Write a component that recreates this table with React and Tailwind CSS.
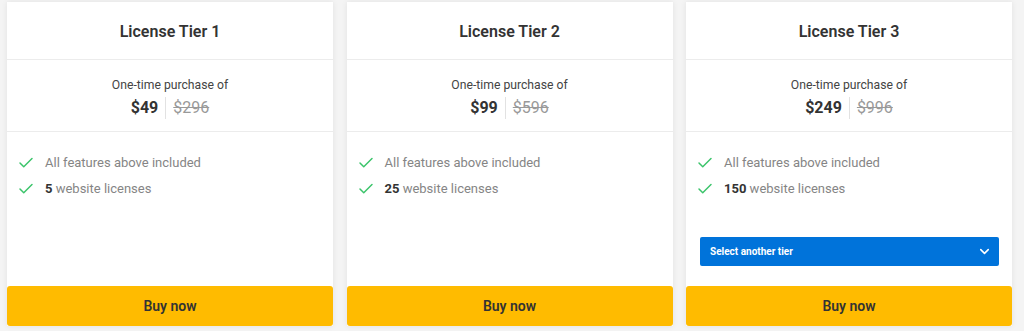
import React from "react";
import { Check, ChevronDown } from "lucide-react";

const tiers = [
    { name: "License Tier 1", price: "$49", old: "$296", licenses: "5" },
    { name: "License Tier 2", price: "$99", old: "$596", licenses: "25" },
    { name: "License Tier 3", price: "$249", old: "$996", licenses: "150", select: true },
];

function TierCard({ tier }) {
    return (
        <div className="flex w-[326px] flex-col bg-white shadow-[0_0_6px_rgba(0,0,0,0.08)]">
            <div className="flex h-[58px] items-center justify-center border-b border-[#ececec] pt-[2px]">
                <h2 className="text-[16px] font-semibold text-[#333]">{tier.name}</h2>
            </div>
            <div className="flex h-[72px] flex-col items-center border-b border-[#ececec] pt-[16px]">
                <p className="text-[12.2px] leading-[18px] text-[#444]">One-time purchase of</p>
                <div className="mt-[3px] flex items-center">
                    <span className="pr-[7px] text-[16px] font-bold leading-[22px] text-[#333]">{tier.price}</span>
                    <span className="border-l border-[#e2e2e2] pl-[7px] text-[16px] leading-[22px] text-[#999] line-through">{tier.old}</span>
                </div>
            </div>
            <div className="flex flex-1 flex-col pl-[10px] pr-[13px] pt-[21px]">
                <ul className="flex flex-col gap-[7px] text-[13px] text-[#858585]">
                    <li className="flex h-[19px] items-center gap-[10px]">
                        <Check size={18} strokeWidth={2} className="text-[#3cc46b]" />
                        <span>All features above included</span>
                    </li>
                    <li className="flex h-[19px] items-center gap-[10px]">
                        <Check size={18} strokeWidth={2} className="text-[#3cc46b]" />
                        <span>
                            <b className="font-bold text-[#333]">{tier.licenses}</b> website licenses
                        </span>
                    </li>
                </ul>
                {tier.select && (
                    <div className="ml-[4px] mt-[39px] flex h-[29px] items-center justify-between rounded-[2px] bg-[#0073da] pl-[10px] pr-[7px]">
                        <span className="text-[10px] font-bold text-white">Select another tier</span>
                        <ChevronDown size={15} strokeWidth={2.5} className="text-white" />
                    </div>
                )}
            </div>
            <button className="h-[40px] rounded-[3px] bg-[#ffbb00] pt-[1px] text-[14px] font-semibold text-[#333]">
                Buy now
            </button>
        </div>
    );
}

export default function App() {
    return (
        <div
            className="flex h-[331px] w-[1024px] gap-[13.5px] bg-[#f4f4f4] pl-[7px] pt-[2px] pb-[5px]"
            style={{ fontFamily: "Roboto, 'Liberation Sans', sans-serif" }}
        >
            {tiers.map((t) => (
                <TierCard key={t.name} tier={t} />
            ))}
        </div>
    );
}
